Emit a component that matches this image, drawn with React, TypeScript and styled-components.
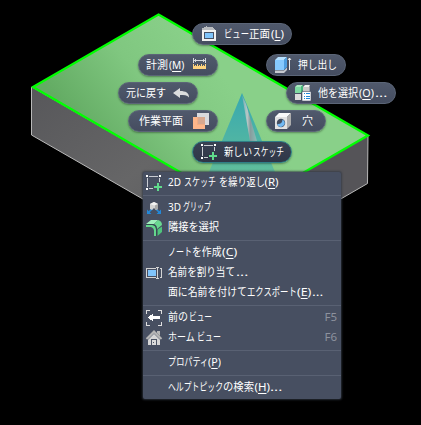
import React, { useLayoutEffect, useRef, useState } from 'react';
import styled, { createGlobalStyle, css } from 'styled-components';

const GlobalStyle = createGlobalStyle`
  html, body { margin: 0; background: #000; overflow: hidden; }
  * { box-sizing: border-box; }
`;

const Viewport = styled.main`
  position: relative;
  width: 421px;
  height: 425px;
  background: #000;
  color: #fff;
  font: 11px/20px 'Noto Sans', 'Noto Sans CJK JP', sans-serif;
`;

const Scene = styled.svg`
  position: absolute;
  inset: 0;
`;

const Pill = styled.button<{ $x: number; $y: number; $w: number; $active?: boolean }>`
  position: absolute;
  left: ${p => p.$x}px;
  top: ${p => p.$y}px;
  width: ${p => p.$w}px;
  height: 22px;
  padding: 0;
  display: flex;
  align-items: center;
  color: #fff;
  font: inherit;
  border: 1px solid #5b6577;
  border-radius: 11px;
  background: linear-gradient(#50596c, #454d60);
  box-shadow: 0 1px 2px rgba(0, 0, 0, 0.35);
  ${p => p.$active && css`
    border-color: #2f7f86;
    background: linear-gradient(#394153, #2f3747);
  `}
`;

const Menu = styled.div`
  position: absolute;
  left: 143px;
  top: 172px;
  width: 198px;
  height: 227px;
  border-radius: 2px;
  background: #474f61;
  box-shadow: 0 0 2px 1px rgba(50, 56, 68, 0.75);
`;

const Item = styled.div`
  display: flex;
  align-items: flex-start;
  height: 20px;
  padding-left: 3px;
`;

const IconSlot = styled.span`
  display: block;
  flex: none;
  width: 16px;
  height: 16px;
  margin-top: 3px;
`;

const PillIcon = styled.span<{ $gap: number }>`
  flex: none;
  width: 16px;
  height: 16px;
  margin-left: ${p => p.$gap}px;
`;

const Glyph = styled.svg`
  display: block;
  width: 16px;
  height: 16px;
  overflow: visible;
`;

const Separator = styled.div`
  height: 5px;
  padding-top: 3px;
  &::after {
    content: '';
    display: block;
    height: 1px;
    background: #596173;
  }
`;

const Shortcut = styled.span`
  margin-left: auto;
  padding-right: 4px;
  font-size: 11.5px;
  color: #8d929e;
`;

const Run = styled.span<{ $w: number; $gap: number; $latin: boolean }>`
  display: block;
  flex: none;
  width: ${p => p.$w}px;
  height: 20px;
  margin-left: ${p => p.$gap}px;
  line-height: ${p => (p.$latin ? 20 : 19)}px;
  white-space: nowrap;
  font-family: ${p => (p.$latin ? "'Noto Sans', sans-serif" : "'Noto Sans CJK JP', sans-serif")};
  font-size: ${p => (p.$latin ? 11.5 : 11)}px;
`;

const RunText = styled.span`
  display: inline-block;
  transform-origin: 0 50%;
  u { text-underline-offset: 2px; text-decoration-thickness: 1px; }
`;

/* Condenses one run of text to the advance width given for it. */
function Fitted({ text, width, gap }: { text: string; width: number; gap: number }) {
  const ref = useRef<HTMLSpanElement>(null);
  const [scale, setScale] = useState(1);
  useLayoutEffect(() => {
    if (ref.current) setScale(width / ref.current.offsetWidth);
  }, [width, text]);
  const key = /^\((.)\)(.*)$/.exec(text);
  return (
    <Run $w={width} $gap={gap} $latin={/^[\x20-\x7e]+$/.test(text)}>
      <RunText ref={ref} style={{ transform: `scaleX(${scale})` }}>
        {key ? <>(<u>{key[1]}</u>){key[2]}</> : text}
      </RunText>
    </Run>
  );
}

type Segment = [text: string, width: number, gap: number];

const Line = ({ parts }: { parts: Segment[] }) => (
  <>{parts.map(([t, w, g]) => <Fitted key={t} text={t} width={w} gap={g} />)}</>
);

type IconName = 'sketch' | 'grip' | 'adjacent' | 'rename' | 'previous' | 'home'
  | 'front' | 'measure' | 'undo' | 'plane' | 'extrude' | 'select' | 'hole';

const drawings: Record<IconName, React.ReactNode> = {
  sketch: (
    <g shapeRendering="crispEdges">
      <path fill="#fff" d="M0 0h2v2H0zM13 0h2v2h-2zM0 13h2v2H0z" />
      <path fill="#c9ccd2" d="M3 1h9v1H3zM1 3h1v9H1zM13 3h1v4h-1zM3 13h4v1H3z" />
      <path fill="#60db8c" d="M11 8h2v3h3v2h-3v3h-2v-3H8v-2h3z" />
    </g>
  ),
  grip: (
    <>
      <path d="M6.500 8.500L2 13M9.500 8.500L14 13" stroke="#2388d8" strokeWidth="1.600" />
      <path fill="#2388d8" d="M1 9.500V14h4.500zM15 9.500V14h-4.500z" />
      <path fill="#d2d2d2" d="M4 4l4-2 4 2v5l-2 1-2-2-2 2-2-1z" />
      <path fill="#f3f3f3" d="M4 4l4-2 4 2-4 1.500z" />
      <path fill="#a8a8a8" d="M9 5.500L12 4v5l-2 1-1-1z" />
    </>
  ),
  adjacent: (
    <>
      <path fill="#9ff0bb" d="M0 4l5-4h7L8 4z" />
      <path fill="#6ad991" d="M8 4l4-4q4 1 4 5l-5 4q0-4-3-5z" />
      <path fill="#4fc47c" d="M11.500 9.500L16 6.500V12l-4.500 4z" />
      <path fill="#64d78c" d="M0 5h6q4 .5 4 5v6H8v-5q0-3-3-4H0z" />
      <path d="M0 4.500h7q3.500.5 3.700 5V16" fill="none" stroke="#2f4a4d" strokeWidth=".8" />
    </>
  ),
  rename: (
    <g shapeRendering="crispEdges" fill="none">
      <path d="M10 3.5H.5v9H10M14 3.5h1.500v9H14" stroke="#d4d4d4" />
      <path fill="#80c4fb" d="M2 5h8v6H2z" />
      <path d="M10 2.500h1.500v11H10M13 2.500h-1.500M13 13.500h-1.500" stroke="#d4d4d4" />
    </g>
  ),
  previous: (
    <g shapeRendering="crispEdges">
      <path fill="none" stroke="#dededf" d="M4 .5H.5V4M12 .5h3.500V4M4 15.500H.5V12M12 15.500h3.500V12" />
      <path fill="#fff" d="M2 7h1V6h1V5h2V4h1v2h7v3H7v2H6v-1H4V9H3V8H2z" />
    </g>
  ),
  home: (
    <>
      <path fill="#b9b9b9" d="M11 1h3v5l-3-3z" />
      <path fill="#d6d6d6" d="M2 8l6-6 6 6v7H2z" />
      <path d="M.5 9L8 1.500 15.500 9" fill="none" stroke="#b5b5b5" strokeWidth="2" />
      <path d="M1.500 10L8 3.500l6.500 6.500" fill="none" stroke="#505766" strokeWidth=".7" />
      <path fill="#4c5465" d="M5 9h6v6H5z" />
      <path fill="#dadada" d="M6 10h4v5H6z" />
      <path fill="#4c5465" d="M7 12h1v1H7z" />
    </>
  ),
  front: (
    <g shapeRendering="crispEdges">
      <path fill="#b9bcc0" d="M1 4V2h2V1h2V0h1v1h6v1h1v1h1v1z" />
      <path fill="#f1f1f1" d="M1 4h14v11H1z" />
      <path fill="#475166" d="M3 6h10v7H3z" />
      <path fill="#7fc4fb" d="M4 7h8v5H4z" />
    </g>
  ),
  measure: (
    <g shapeRendering="crispEdges">
      <path fill="#d6d8dc" d="M1 1h1v5H1zM13 1h1v5h-1zM2 3h11v1H2zM3 2h1v3H3zM11 2h1v3h-1z" />
      <path fill="#ffd27d" d="M1 9h13v3H1zM1 7h1v2H1zM3 8h1v1H3zM5 7h1v2H5zM7 8h1v1H7zM9 7h1v2H9zM11 8h1v1h-1zM13 7h1v2h-1z" />
    </g>
  ),
  undo: (
    <path fill="#dbdcde" d="M0 8l7-5v3c6 0 9 2 9 6.500C14 10 11 10 7 10v3z" />
  ),
  plane: (
    <g shapeRendering="crispEdges">
      <path fill="#d9dadd" d="M4 0h12v12h-4V4H4z" />
      <path fill="#fdb68a" d="M0 4h12v12H0z" />
      <path fill="#d8a990" d="M4 4h8v8H4z" />
      <path d="M4.500 4V11.500H12" fill="none" stroke="#f4ac82" />
    </g>
  ),
  extrude: (
    <>
      <path fill="#c6c9ce" d="M0 13.500h9l3-3v2.500l-3 3H0z" />
      <path fill="#86c9fd" d="M0 3h9v10H0z" />
      <path fill="#b6e0ff" d="M0 3l3-3h9L9 3z" />
      <path fill="#4e9ee0" d="M9 3l3-3v10l-3 3z" />
      <path d="M14.500 13V1M13 3l1.500-2L16 3" fill="none" stroke="#eee" />
    </>
  ),
  select: (
    <>
      <path fill="#7fdaa2" d="M0 2h6v6H0z" /><path fill="#a9e9bf" d="M0 2l2-2h6L6 2z" />
      <path fill="#42b879" d="M6 2l2-2v5L6 8z" />
      <path fill="#c8c8c8" d="M8 2h6v6H8z" /><path fill="#efefef" d="M8 2l2-2h5l-1 2z" />
      <path fill="#dcdcdc" d="M0 9h6v6H0z" />
      <path fill="#979ca4" d="M14 2l1-2v6l-1 2z" />
      <path fill="#fff" stroke="#475064" strokeWidth=".6" d="M7 6.500h9V16H7z" />
      <path fill="#2388d8" d="M9 8h1v1H9zM9 11h1v1H9zM9 13h1v1H9zM11 8h4v1h-4zM11 11h4v1h-4zM11 13h4v1h-4z" />
    </>
  ),
  hole: (
    <>
      <path fill="#e2e2e2" d="M0 4h12v12H0z" />
      <path fill="#f9f9f9" d="M0 4l4-4h12l-4 4z" />
      <path fill="#adadad" d="M12 4l4-4v12l-4 4z" />
      <circle cx="6" cy="10" r="4.200" fill="#444e60" />
      <path fill="#72b9f2" d="M7.500 6.500q2.300 1 2.300 3.500t-3.800 4q-3 0-3.800-3 5 .5 5.300-4.500z" />
    </>
  ),
};

const Icon = ({ name }: { name: IconName }) => (
  <Glyph viewBox="0 0 16 16" aria-hidden="true">{drawings[name]}</Glyph>
);

interface PillSpec {
  x: number; y: number; w: number; icon: IconName; iconGap: number;
  parts: Segment[]; trailing?: boolean; active?: boolean;
}

const pills: PillSpec[] = [
  { x: 192, y: 23, w: 100, icon: 'front', iconGap: 8, parts: [['ビュー', 25, 7], ['正面', 21, 0], ['(L)', 13, 1]] },
  { x: 138, y: 54, w: 80, icon: 'measure', iconGap: 8, trailing: true, parts: [['計測', 22, 7], ['(M)', 15, 1]] },
  { x: 118, y: 82, w: 80, icon: 'undo', iconGap: 7, trailing: true, parts: [['元に戻す', 40, 7]] },
  { x: 128, y: 110, w: 90, icon: 'plane', iconGap: 10, trailing: true, parts: [['作業平面', 44, 10]] },
  { x: 192, y: 141, w: 100, icon: 'sketch', iconGap: 8, active: true, parts: [['新しい', 28, 7], ['スケッチ', 31, 1]] },
  { x: 266, y: 54, w: 80, icon: 'extrude', iconGap: 8, parts: [['押し出し', 39, 7]] },
  { x: 286, y: 82, w: 110, icon: 'select', iconGap: 8, parts: [['他を選択', 40, 7], ['(O)', 15, 1], ['...', 12, 0]] },
  { x: 266, y: 110, w: 60, icon: 'hole', iconGap: 8, parts: [['穴', 11, 11]] },
];

interface Entry { icon?: IconName; parts: Segment[]; shortcut?: string }

const groups: Entry[][] = [
  [{ icon: 'sketch', parts: [['2D', 13, 5.5], ['スケッチ', 32, 3], ['を繰り返し', 46, 3], ['(R)', 14, 0]] }],
  [
    { icon: 'grip', parts: [['3D', 13, 5.5], ['グリップ', 28, 2]] },
    { icon: 'adjacent', parts: [['隣接を選択', 51, 5.5]] },
  ],
  [
    { parts: [['ノート', 24, 5.5], ['を作成', 29.5, 0], ['(C)', 15, 1]] },
    { icon: 'rename', parts: [['名前を割り当て', 67, 5.5], ['...', 12, 1]] },
    { parts: [['面に名前を付けて', 79, 5.5], ['エクスポート', 50, 0], ['(E)', 14, 0], ['...', 11, 1]] },
  ],
  [
    { icon: 'previous', parts: [['前の', 20, 5.5], ['ビュー', 23, 1]], shortcut: 'F5' },
    { icon: 'home', parts: [['ホーム', 27, 5.5], ['ビュー', 24, 2.5]], shortcut: 'F6' },
  ],
  [{ parts: [['プロパティ', 40, 5.5], ['(P)', 13, 0]] }],
  [{ parts: [['ヘルプトピック', 55, 5.5], ['の検索', 31, 0], ['(H)', 15, 1], ['...', 12, 0]] }],
];

export default function App() {
  return (
    <>
      <GlobalStyle />
      <Viewport>
        <Scene width="421" height="425" viewBox="0 0 421 425">
          <defs>
            <linearGradient id="face" gradientUnits="userSpaceOnUse" x1="95" y1="150" x2="210" y2="60">
              <stop offset="0" stopColor="#63ab63" />
              <stop offset=".55" stopColor="#80c780" />
              <stop offset="1" stopColor="#89d089" />
            </linearGradient>
            <linearGradient id="side" x1="0" y1="0" x2="1" y2="1">
              <stop offset="0" stopColor="#57575a" />
              <stop offset=".5" stopColor="#666667" />
              <stop offset="1" stopColor="#555558" />
            </linearGradient>
            <linearGradient id="cone" x1="0" y1="0" x2="0" y2="1">
              <stop offset="0" stopColor="#37a8b0" />
              <stop offset="1" stopColor="#5fbd9c" />
            </linearGradient>
            <linearGradient id="shine" x1="0" y1="0" x2="1" y2="0">
              <stop offset="0" stopColor="#69aeb2" />
              <stop offset=".35" stopColor="#b9c8c7" />
              <stop offset=".55" stopColor="#879c9d" />
              <stop offset="1" stopColor="#87bdb8" />
            </linearGradient>
          </defs>
          <path d="M32 87L242 208V256L31.500 135V87" fill="url(#side)" stroke="#b9b9b9" />
          <path d="M242 208L368 135L367.500 183.500L242 256" fill="#555458" stroke="#b9b9b9" />
          <path d="M158.500 14.500L368 135.500L242 208L33 87Z" fill="url(#face)" stroke="#00ff00" strokeWidth="2.300" />
          <path d="M242 93L209 172H275Z" fill="url(#cone)" />
          <path d="M242 95L250 141H257L246 104Z" fill="url(#shine)" />
        </Scene>

        {pills.map(p => (
          <Pill key={`${p.x}-${p.y}`} $x={p.x} $y={p.y} $w={p.w} $active={p.active}>
            {!p.trailing && <PillIcon $gap={p.iconGap}><Icon name={p.icon} /></PillIcon>}
            <Line parts={p.parts} />
            {p.trailing && <PillIcon $gap={p.iconGap}><Icon name={p.icon} /></PillIcon>}
          </Pill>
        ))}

        <Menu>
          {groups.map((group, i) => (
            <React.Fragment key={i}>
              {i > 0 && <Separator />}
              {group.map((e, j) => (
                <Item key={j}>
                  <IconSlot>{e.icon && <Icon name={e.icon} />}</IconSlot>
                  <Line parts={e.parts} />
                  {e.shortcut && <Shortcut>{e.shortcut}</Shortcut>}
                </Item>
              ))}
            </React.Fragment>
          ))}
        </Menu>
      </Viewport>
    </>
  );
}
